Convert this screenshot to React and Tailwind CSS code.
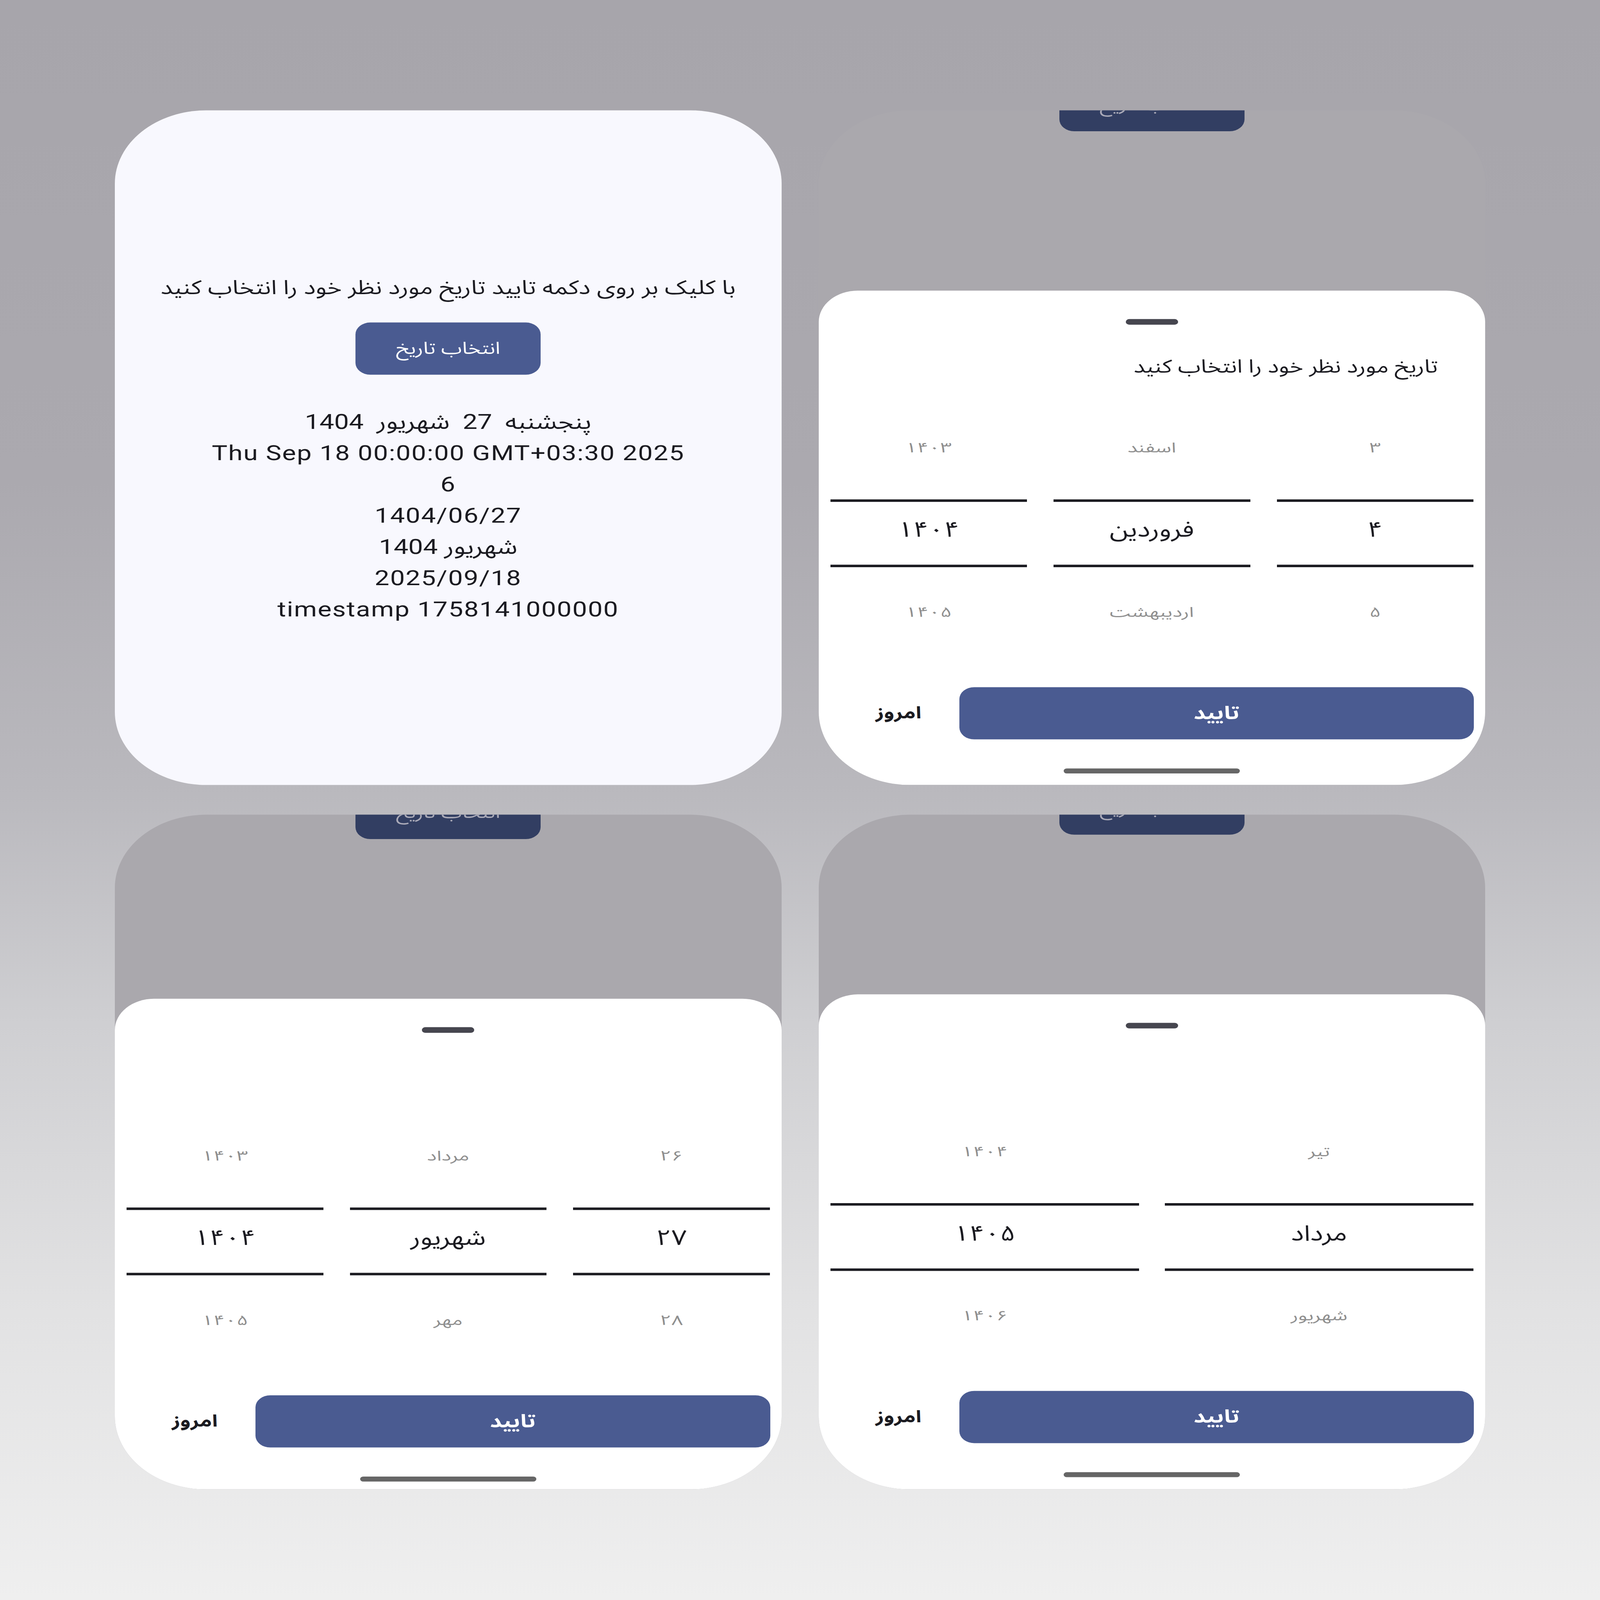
import React, { useLayoutEffect, useState } from 'react';

// Persian date picker demo: four phone screens in a 2x2 grid

function WheelColumn({ prev, cur, next }) {
  return (
    <div className="flex flex-col">
      <div className="h-[263px] pb-[20px] flex items-center justify-center">
        <span className="inline-block text-[52px] leading-none text-[#8f8f8f] scale-y-[0.85]">{prev}</span>
      </div>
      <div className="h-[263px] py-[23px]">
        <div className="h-full border-y-[8px] border-[#1b1b21] pb-[20px] flex items-center justify-center">
          <span className="text-[69px] leading-none text-[#1b1b21]">{cur}</span>
        </div>
      </div>
      <div className="h-[263px] pb-[20px] flex items-center justify-center">
        <span className="inline-block text-[52px] leading-none text-[#8f8f8f] scale-y-[0.85]">{next}</span>
      </div>
    </div>
  );
}

function PickerSheet({ title, columns, gridClass }) {
  return (
    <div className="flex-1 bg-white rounded-t-[100px] flex flex-col font-['Noto_Sans_Arabic','DejaVu_Sans',sans-serif]">
      <div className="mt-[91px] mx-auto w-[134px] h-[18px] rounded-full bg-[#46464f]" />
      <div dir="rtl" className="h-[273px] flex items-center pr-[121px] text-[59px] text-[#1b1b21]">
        {title}
      </div>
      <div className={gridClass}>
        {columns.map((c, i) => (
          <WheelColumn key={i} prev={c[0]} cur={c[1]} next={c[2]} />
        ))}
      </div>
      <div className="mt-[98px] h-[167px] px-[29px] flex">
        <div className="w-[331px] flex items-center justify-center pl-[20px] text-[53px] font-bold text-[#1b1b21]">
          امروز
        </div>
        <button className="flex-1 rounded-[38px] bg-[#4a5b91] text-white text-[58px] font-bold">
          تایید
        </button>
      </div>
      <div className="mt-[93px] mx-auto w-[451px] h-[16px] rounded-full bg-[#666666]" />
    </div>
  );
}

// the page's button, dimmed behind the scrim and mostly scrolled out of view
function PeekButton({ className }) {
  return (
    <div className={className}>
      <div className="w-[474px] h-[167px] rounded-[38px] bg-[#323e62] text-[#aaaab8] text-[54px] flex items-center justify-center font-['Noto_Sans_Arabic','DejaVu_Sans',sans-serif]">
        انتخاب تاریخ
      </div>
    </div>
  );
}

export default function App() {
  // the board is drawn at 4096x5120; squeeze it vertically if the window is shorter
  const [fit, setFit] = useState(1);
  useLayoutEffect(() => {
    const update = () => setFit(Math.min(1, window.innerHeight / 5120));
    update();
    window.addEventListener('resize', update);
    return () => window.removeEventListener('resize', update);
  }, []);

  const dateLines = [
    'پنجشنبه  27  شهریور  1404',
    'Thu Sep 18 00:00:00 GMT+03:30 2025',
    '6',
    '1404/06/27',
    'شهریور 1404',
    '2025/09/18',
    'timestamp 1758141000000',
  ];

  return (
    <div className="w-[4096px] overflow-hidden" style={{ height: 5120 * fit }}>
      <div
        className="w-[4096px] h-[5120px] origin-top-left bg-[linear-gradient(180deg,#a7a5ab_0%,#aba9af_30%,#b9b8bd_49%,#cfcfd2_64%,#e2e2e3_82%,#efefef_100%)] pt-[353px] px-[294px]"
        style={{ transform: `scaleY(${fit})` }}
      >
        <div className="grid grid-cols-2 gap-[95px]">
          {/* screen 1: result */}
          <div className="h-[2159px] pt-[14px] rounded-[234px] overflow-hidden bg-[#f8f8fe] flex flex-col items-center justify-center">
            <p dir="rtl" className="text-[63px] leading-[80px] text-[#1b1b21] font-['Noto_Sans_Arabic','DejaVu_Sans',sans-serif]">
              با کلیک بر روی دکمه تایید تاریخ مورد نظر خود را انتخاب کنید
            </p>
            <button className="mt-[71px] w-[474px] h-[167px] rounded-[38px] bg-[#4a5b91] text-white text-[54px] font-['Noto_Sans_Arabic','DejaVu_Sans',sans-serif]">
              انتخاب تاریخ
            </button>
            <div className="mt-[100px] text-center text-[67px] leading-[100px] tracking-[2px] text-[#1b1b21] font-['Roboto','Noto_Sans_Arabic','DejaVu_Sans',sans-serif]">
              {dateLines.map((l, i) => (
                <div key={i} dir="rtl" className="whitespace-pre">{l}</div>
              ))}
            </div>
          </div>

          {/* screen 2: day / month / year with title */}
          <div className="h-[2159px] rounded-[234px] overflow-hidden bg-[#aaa8ad] flex flex-col">
            <div className="h-[577px] shrink-0 flex justify-center">
              <PeekButton className="-mt-[100px]" />
            </div>
            <PickerSheet
              title="تاریخ مورد نظر خود را انتخاب کنید"
              gridClass="grid grid-cols-3 gap-[68px] px-[30px]"
              columns={[
                ['۱۴۰۳', '۱۴۰۴', '۱۴۰۵'],
                ['اسفند', 'فروردین', 'اردیبهشت'],
                ['۳', '۴', '۵'],
              ]}
            />
          </div>

          {/* screen 3 */}
          <div className="h-[2159px] rounded-[234px] overflow-hidden bg-[#aaa8ad] flex flex-col">
            <div className="h-[589px] shrink-0 flex justify-center">
              <PeekButton className="-mt-[89px]" />
            </div>
            <PickerSheet
              title=""
              gridClass="grid grid-cols-3 gap-[68px] px-[30px]"
              columns={[
                ['۱۴۰۳', '۱۴۰۴', '۱۴۰۵'],
                ['مرداد', 'شهریور', 'مهر'],
                ['۲۶', '۲۷', '۲۸'],
              ]}
            />
          </div>

          {/* screen 4: month / year */}
          <div className="h-[2159px] rounded-[234px] overflow-hidden bg-[#aaa8ad] flex flex-col">
            <div className="h-[575px] shrink-0 flex justify-center">
              <PeekButton className="-mt-[103px]" />
            </div>
            <PickerSheet
              title=""
              gridClass="grid grid-cols-2 gap-[66px] px-[30px]"
              columns={[
                ['۱۴۰۴', '۱۴۰۵', '۱۴۰۶'],
                ['تیر', 'مرداد', 'شهریور'],
              ]}
            />
          </div>
        </div>
      </div>
    </div>
  );
}
